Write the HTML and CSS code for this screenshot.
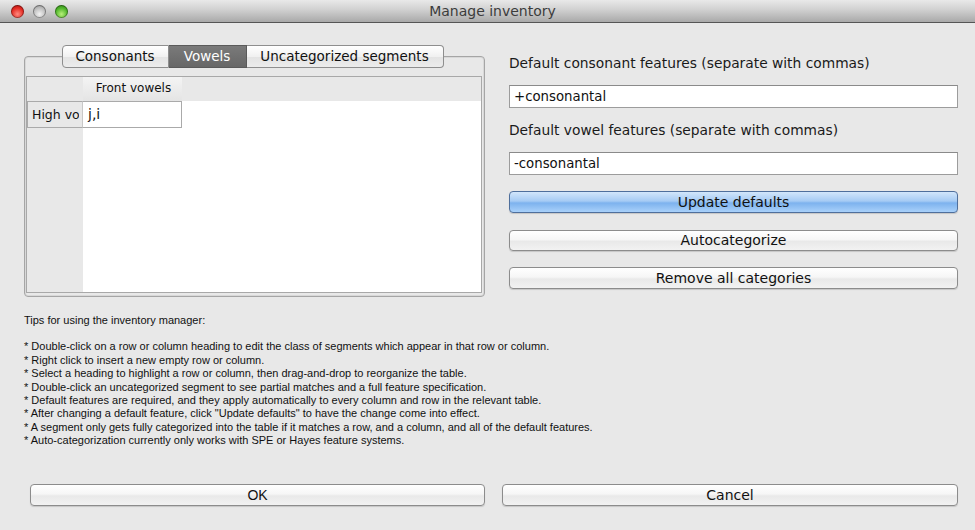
FILE: index.html
```html
<!DOCTYPE html>
<html>
<head>
<meta charset="utf-8">
<link rel="stylesheet" href="styles.css">
</head>
<body>
<div class="window">
  <div class="titlebar">
    <div class="lights">
      <span class="light red"></span>
      <span class="light gray"></span>
      <span class="light green"></span>
    </div>
    <div class="title">Manage inventory</div>
  </div>
  <div class="content">
    <div class="top">
      <div class="leftpanel">
        <div class="tabs">
          <div class="tab first">Consonants</div>
          <div class="tab selected">Vowels</div>
          <div class="tab last">Uncategorized segments</div>
        </div>
        <div class="box">
          <div class="table">
            <div class="corner"></div>
            <div class="colhead">Front vowels</div>
            <div class="headfill"></div>
            <div class="rowhead"><span class="clip">High vowels</span></div>
            <div class="cell">j,i</div>
            <div class="cellfill"></div>
            <div class="leftfill"></div>
            <div class="bodyfill"></div>
          </div>
        </div>
      </div>
      <div class="rightpanel">
        <div class="label">Default consonant features (separate with commas)</div>
        <div class="input">+consonantal</div>
        <div class="label second">Default vowel features (separate with commas)</div>
        <div class="input">-consonantal</div>
        <div class="btn blue b1">Update defaults</div>
        <div class="btn b2">Autocategorize</div>
        <div class="btn b3">Remove all categories</div>
      </div>
    </div>
    <div class="tips">
      <div>Tips for using the inventory manager:</div>
      <div class="blank"></div>
      <div>* Double-click on a row or column heading to edit the class of segments which appear in that row or column.</div>
      <div>* Right click to insert a new empty row or column.</div>
      <div>* Select a heading to highlight a row or column, then drag-and-drop to reorganize the table.</div>
      <div>* Double-click an uncategorized segment to see partial matches and a full feature specification.</div>
      <div>* Default features are required, and they apply automatically to every column and row in the relevant table.</div>
      <div>* After changing a default feature, click "Update defaults" to have the change come into effect.</div>
      <div>* A segment only gets fully categorized into the table if it matches a row, and a column, and all of the default features.</div>
      <div>* Auto-categorization currently only works with SPE or Hayes feature systems.</div>
    </div>
    <div class="bottom">
      <div class="btn ok">OK</div>
      <div class="btn cancel">Cancel</div>
    </div>
  </div>
</div>
</body>
</html>
```

FILE: styles.css
```css
* { box-sizing: border-box; }
html, body { margin: 0; padding: 0; }
body {
  width: 975px;
  height: 530px;
  overflow: hidden;
  background: #e8e8e8;
  font-family: "DejaVu Sans", "Lucida Grande", sans-serif;
  color: #1a1a1a;
}
.window { width: 975px; height: 530px; display: flex; flex-direction: column; }

.titlebar {
  height: 23px;
  flex: none;
  background: linear-gradient(#e9e9e9, #d3d3d3 40%, #a9a9a9);
  border-bottom: 1px solid #555;
  display: flex;
  align-items: center;
  position: relative;
}
.lights { display: flex; gap: 9px; padding-left: 11px; padding-top: 1px; }
.light {
  width: 13px; height: 13px; border-radius: 50%;
  box-shadow: inset 0 0 0 1px rgba(0,0,0,0.35);
}
.light.red { background: radial-gradient(circle at 50% 70%, #ff8a80 0%, #e32a22 55%, #9c1010 100%); }
.light.gray { background: radial-gradient(circle at 50% 70%, #f2f2f2 0%, #bdbdbd 55%, #8a8a8a 100%); }
.light.green { background: radial-gradient(circle at 50% 70%, #b8f07a 0%, #4fb52a 55%, #2a7a12 100%); }
.title {
  position: absolute; left: 0; right: 0; top: 0; height: 22px;
  text-align: center; line-height: 23px; padding-left: 10px;
  font-size: 14px; color: #3c3c3c;
}

.content { flex: 1; display: flex; flex-direction: column; }
.top { display: flex; padding-left: 24px; padding-top: 22px; gap: 24px; }

.leftpanel { width: 461px; display: flex; flex-direction: column; }
.tabs {
  display: flex; justify-content: center; position: relative; z-index: 1;
  margin-bottom: -12px; padding-right: 4px;
}
.tab {
  height: 23px; line-height: 21px; font-size: 13.5px; color: #111;
  border: 1px solid #8e8e8e; border-left: none;
  background: linear-gradient(#ffffff, #f1f1f1 50%, #e3e3e3 51%, #ececec);
  padding: 0 10px;
}
.tab.first { border-left: 1px solid #8e8e8e; border-radius: 4px 0 0 4px; width: 107px; text-align: center; }
.tab.selected { background: linear-gradient(#7a7a7a, #676767); color: #fff; width: 78px; text-align: center; border-color: #5a5a5a; }
.tab.last { border-radius: 0 4px 4px 0; width: 197px; text-align: center; }

.box {
  height: 241px;
  border: 1px solid #a5a5a5;
  border-radius: 4px;
  padding: 19px 2px 3px 1px;
  box-shadow: inset 0 0 0 1px #d8d8d8;
}
.table {
  height: 100%;
  border: 1px solid #a8a8a8;
  background: #fff;
  display: grid;
  grid-template-columns: 56px 99px 1fr;
  grid-template-rows: 24px 27px 1fr;
}
.corner, .headfill { background: #e8e8e8; }
.colhead {
  background: linear-gradient(#f4f4f4, #e4e4e4);
  font-size: 12px; text-align: center; line-height: 23px; color: #111;
  padding-left: 2px;
}
.rowhead {
  background: #e8e8e8;
  border: 1px solid #aaa; border-right: 1px solid #c8c8c8;
  font-size: 12.5px; line-height: 25px; padding-left: 4px;
  color: #111;
}
.clip { display: block; width: 47px; white-space: nowrap; overflow: hidden; }
.cell {
  border: 1px solid #aaa; border-left: none;
  font-size: 14px; line-height: 25px; padding-left: 5px; color: #111;
}
.cellfill { background: #fff; }
.leftfill { background: #e8e8e8; }
.bodyfill { grid-column: 2 / 4; background: #fff; }

.rightpanel { width: 449px; display: flex; flex-direction: column; padding-top: 9px; }
.label { font-size: 13.8px; line-height: 18px; color: #1a1a1a; }
.label.second { margin-top: 13px; }
.input {
  margin-top: 13px; height: 23px;
  background: #fff; border: 1px solid #9c9c9c; border-top-color: #8a8a8a;
  font-size: 13.3px; line-height: 21px; padding-left: 4px; color: #111;
}
.btn {
  height: 22px; border: 1px solid #8c8c8c; border-radius: 4px;
  background: linear-gradient(#ffffff, #f6f6f6 45%, #e9e9e9 55%, #f2f2f2);
  box-shadow: 0 1px 1px rgba(0,0,0,0.15);
  text-align: center; font-size: 14px; line-height: 20px; color: #111;
}
.btn.blue {
  background: linear-gradient(#d2e6fb, #a6cbf4 45%, #7db2ee 55%, #a9d1fa);
  border-color: #4f6f9c;
}
.b1 { margin-top: 16px; }
.b2 { margin-top: 17px; height: 21px; line-height: 19px; }
.b3 { margin-top: 16px; }

.tips {
  padding-left: 24px; margin-top: 17px;
  font-family: "Liberation Sans", Arial, sans-serif;
  font-size: 11px; line-height: 13.4px; color: #111;
}
.blank { height: 13px; }

.bottom { display: flex; padding-left: 30px; gap: 17px; margin-top: 36px; }
.ok { width: 455px; font-family: "Liberation Sans", Arial, sans-serif; font-size: 14px; }
.cancel { width: 456px; }
```
